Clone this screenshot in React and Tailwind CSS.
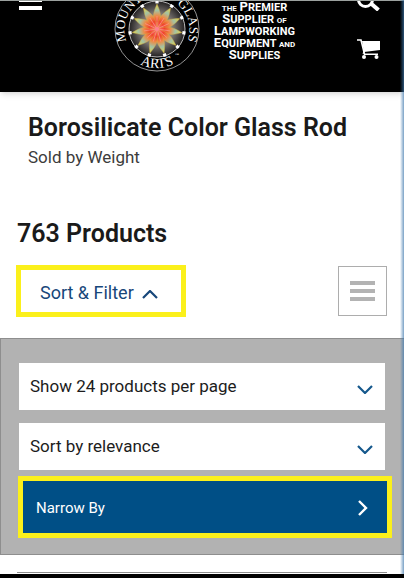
import React, { useState } from 'react';

const ticks = Array.from({ length: 11 }, (_, i) => (i * 360) / 11);

const Logo = () => (
  <svg className="w-[86px] h-[72px] shrink-0" viewBox="0 0 86 72" role="img" aria-label="Mountain Glass Arts">
    <defs>
      <radialGradient id="disc">
        <stop offset="0" stopColor="#d8d0cc" />
        <stop offset="0.6" stopColor="#77726f" />
        <stop offset="1" stopColor="#232122" />
      </radialGradient>
      <radialGradient id="petal" gradientUnits="userSpaceOnUse" cx="43" cy="28" r="25">
        <stop offset="0" stopColor="#ff6f7d" />
        <stop offset="0.3" stopColor="#f0442c" />
        <stop offset="0.52" stopColor="#ee8a45" />
        <stop offset="0.74" stopColor="#a3c3a4" />
        <stop offset="1" stopColor="#e3d24a" />
      </radialGradient>
      <path id="ringTop" d="M 12.5 40 A 32.5 32.5 0 1 1 73.5 40" />
      <path id="ringBottom" d="M 4 28 A 39 39 0 0 0 82 28" />
    </defs>
    <circle cx="43" cy="28" r="42" fill="none" stroke="#b9b9b9" strokeWidth="0.8" />
    <circle cx="43" cy="28" r="28" fill="url(#disc)" stroke="#e6e6e6" strokeWidth="0.8" />
    {ticks.map((angle) => (
      <g key={angle} transform={`rotate(${angle} 43 28)`}>
        <path d="M43 28 C37.5 18 39 12 43 3 C47 12 48.5 18 43 28 Z" fill="url(#petal)" stroke="#d9b441" strokeWidth="0.4" />
        <path d="M43 28 V15" stroke="#ff9a9a" strokeWidth="0.6" />
        <rect x="41.4" y="-0.8" width="3.2" height="3.2" fill="#fff" />
      </g>
    ))}
    <circle cx="43" cy="28" r="2" fill="#ff7f90" />
    <g fill="#fff" fontFamily="'Liberation Serif', serif">
      <text fontSize="13">
        <textPath href="#ringTop" startOffset="0">MOUNTAIN</textPath>
      </text>
      <text fontSize="13" textAnchor="end">
        <textPath href="#ringTop" startOffset="100%">GLASS</textPath>
      </text>
      <text fontSize="14" textAnchor="middle">
        <textPath href="#ringBottom" startOffset="50%">ARTS</textPath>
      </text>
      <text x="61" y="55" fontSize="4">™</text>
    </g>
  </svg>
);

const Tagline = () => (
  <p className="text-center text-[11px] leading-3 font-bold uppercase text-white">
    <span className="block h-3"><span className="text-[8px]">The</span> <span className="text-[13px]">P</span>remier</span>
    <span className="block h-3"><span className="text-[13px]">S</span>upplier <span className="text-[8px]">of</span></span>
    <span className="block h-3"><span className="text-[13px]">L</span>ampworking</span>
    <span className="block h-3"><span className="text-[13px]">E</span>quipment <span className="text-[8px]">and</span></span>
    <span className="block h-3"><span className="text-[13px]">S</span>upplies</span>
  </p>
);

const Chevron = ({ className, d = 'M1 1 L8 8 L15 1' }) => (
  <svg className={className} viewBox="0 0 16 9" fill="none" stroke="currentColor" strokeWidth="2.2" aria-hidden="true">
    <path d={d} />
  </svg>
);

const SelectBox = ({ label, options }) => (
  <div className="relative">
    <select
      aria-label={label}
      className="block h-[47px] w-full appearance-none bg-white pl-[11px] pr-10 text-[17px] text-[#1c1c1c]"
    >
      {options.map((option) => (
        <option key={option}>{option}</option>
      ))}
    </select>
    <Chevron className="pointer-events-none absolute right-3 top-[22px] h-[9px] w-4 text-[#15588c]" />
  </div>
);

const Header = () => (
  <header className="grid h-[92px] grid-cols-[auto_1fr_auto] items-start overflow-hidden border-t border-[#9ba19e] bg-black pl-[19px] pr-6 shadow-md">
    <button type="button" aria-label="Menu" className="text-white">
      <svg className="h-[9px] w-[23px]" viewBox="0 0 23 9" fill="currentColor">
        <path d="M0 0h23v1H0zM0 5h23v4H0z" />
      </svg>
    </button>
    <a href="#home" className="flex items-start justify-center gap-[14px] pl-[10px]">
      <Logo />
      <Tagline />
    </a>
    <div className="flex flex-col gap-7">
      <button type="button" aria-label="Search" className="text-white">
        <svg className="h-[10px] w-[23px]" viewBox="0 0 23 10" fill="none" stroke="currentColor">
          <circle cx="8.5" cy="-1.5" r="7" strokeWidth="3" />
          <path d="M14 2.5 L21.5 9" strokeWidth="4" />
        </svg>
      </button>
      <button type="button" aria-label="Cart" className="text-white">
        <svg className="h-5 w-[23px]" viewBox="0 0 23 20" fill="none" stroke="currentColor">
          <path d="M0 1 H4 L7.5 15.2 H21" strokeWidth="1.6" />
          <path d="M5 2 H23 V11 L7 13 Z" fill="currentColor" stroke="none" />
          <path d="M6 14.8 L7.5 12" strokeWidth="1.2" />
          <circle cx="7" cy="18" r="2" fill="currentColor" stroke="none" />
          <circle cx="19.5" cy="18" r="2" fill="currentColor" stroke="none" />
        </svg>
      </button>
    </div>
  </header>
);

const App = () => {
  const [open, setOpen] = useState(true);

  return (
    <div className="relative overflow-hidden border-b-4 border-black bg-white font-[Roboto,sans-serif] text-[#1a1a1a]">
      <Header />

      <main>
        <div className="px-7 pt-5">
          <h1 className="whitespace-nowrap text-[25px] leading-8 font-semibold">Borosilicate Color Glass Rod</h1>
          <p className="text-[17px] leading-[26px] text-[#3c3c3c]">Sold by Weight</p>
        </div>

        <h2 className="mt-12 px-[17px] text-[25px] leading-8 font-semibold">763 Products</h2>

        <div className="mt-[15px] flex items-center justify-between pl-4 pr-[17px]">
          <button
            type="button"
            aria-expanded={open}
            onClick={() => setOpen(!open)}
            className="flex h-[52px] w-[170px] items-center gap-2 border-5 border-[#fbf01b] pl-[19px] pt-[2px] text-[18px] text-[#17477a]"
          >
            Sort &amp; Filter
            <Chevron className="mt-1 h-[9px] w-4" d="M1 8 L8 1 L15 8" />
          </button>
          <button
            type="button"
            aria-label="List view"
            className="flex h-[50px] w-[49px] flex-col items-center justify-center gap-1 border border-[#adadad]"
          >
            <span className="h-1 w-[25px] bg-[#b3b3b3]" />
            <span className="h-1 w-[25px] bg-[#b3b3b3]" />
            <span className="h-1 w-[25px] bg-[#b3b3b3]" />
          </button>
        </div>

        {open && (
          <section className="mt-[21px] border-y border-l border-[#8e8e8e] bg-[#b2b2b2] pb-4 pt-6">
            <div className="flex flex-col gap-[13px] pl-[18px] pr-[19px]">
              <SelectBox
                label="Products per page"
                options={['Show 24 products per page', 'Show 48 products per page']}
              />
              <SelectBox label="Sort order" options={['Sort by relevance', 'Sort by price']} />
            </div>
            <div className="mt-[6px] pl-[17px] pr-3">
              <button
                type="button"
                className="flex h-[62px] w-full items-center justify-between border-5 border-[#fbf01b] bg-[#004f86] pl-[13px] pr-[19px] pt-[2px] text-[15px] text-white"
              >
                Narrow By
                <svg className="h-4 w-[10px]" viewBox="0 0 10 16" fill="none" stroke="currentColor" strokeWidth="2.4" aria-hidden="true">
                  <path d="M1 1 L8 8 L1 15" />
                </svg>
              </button>
            </div>
          </section>
        )}

        <hr className="mx-[17px] mb-[1px] mt-[17px] border-[#8e8e8e]" />
      </main>

      {/* edge of the next panel */}
      <div className="pointer-events-none absolute inset-y-0 right-0 w-1 bg-gradient-to-r from-[#3f78ad]/0 to-[#3f78ad]/70" />
    </div>
  );
};

export default App;
